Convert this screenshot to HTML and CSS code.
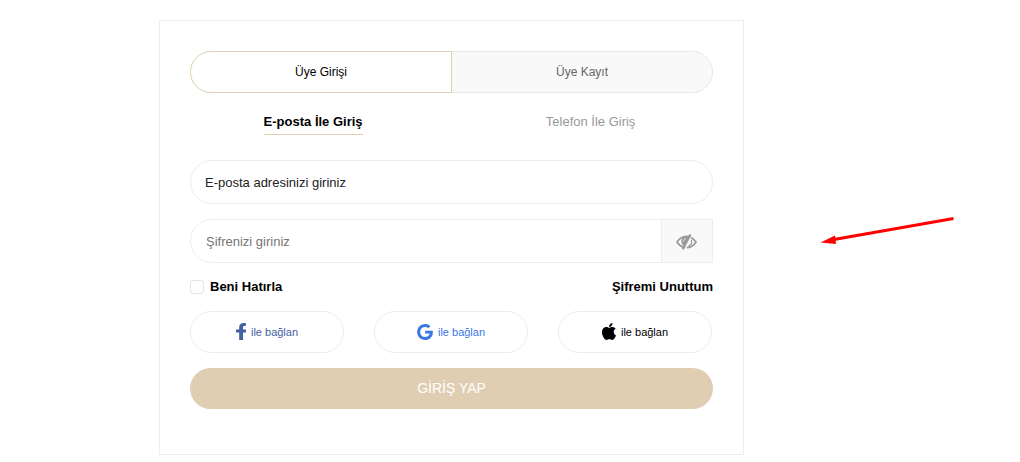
FILE: index.html
```html
<!DOCTYPE html>
<html lang="tr">
<head>
<meta charset="utf-8">
<title>Üye Girişi</title>
<link rel="stylesheet" href="styles.css">
</head>
<body>
<main class="card">
  <div class="tabs">
    <a class="tab tab-active">Üye Girişi</a>
    <a class="tab">Üye Kayıt</a>
  </div>
  <div class="methods">
    <a class="method method-active">E-posta İle Giriş</a>
    <a class="method">Telefon İle Giriş</a>
  </div>
  <div class="field"><span class="label">E-posta adresinizi giriniz</span></div>
  <div class="field password">
    <span class="label">Şifrenizi giriniz</span>
    <span class="toggle">
      <svg width="21" height="16" viewBox="0 0 21 16" fill="none" stroke="#999" stroke-width="1.7" stroke-linecap="round">
        <path d="M8.300 13.400C5 12.600 2.600 10.500 1 8C3.200 4.600 6.500 2.300 10.500 2.300C11.400 2.300 12.200 2.400 13 2.600"/>
        <path d="M15.400 3.700C17.300 4.700 18.800 6.200 20 8C17.900 11.300 14.900 13.400 11.400 13.700"/>
        <path d="M13.200 2.600C7.500 1.600 4.800 4.500 5.400 8.200C5.700 10 6.800 11.300 8.100 12Z" fill="#999" stroke="none"/>
        <path d="M7.500 7.200C7.600 6 8.400 5.200 9.500 5" stroke="#f9f9f9" stroke-width=".8"/>
        <path d="M14 1.200L7.200 14.600" stroke-width="2.200"/>
        <path d="M15.500 6.400C16 8.700 14.800 10.900 12.900 11.800" stroke-width="1.200"/>
      </svg>
    </span>
  </div>
  <div class="options">
    <label class="remember"><span class="box"></span>Beni Hatırla</label>
    <a>Şifremi Unuttum</a>
  </div>
  <div class="socials">
    <a class="social facebook">
      <svg width="10" height="17" viewBox="22 0 258 512" preserveAspectRatio="none" fill="currentColor"><path d="M279.140 288l14.220-92.660h-88.910v-60.130c0-25.350 12.420-50.060 52.240-50.060h40.420V6.260S260.430 0 225.360 0c-73.220 0-121.080 44.380-121.080 124.720v70.620H22.890V288h81.390v224h100.170V288z"/></svg>
      <span>ile bağlan</span>
    </a>
    <a class="social google">
      <svg width="16" height="16" viewBox="0 8 488 496" fill="currentColor"><path d="M488 261.800C488 403.300 391.100 504 248 504 110.800 504 0 393.200 0 256S110.800 8 248 8c66.800 0 123 24.500 166.300 64.900l-67.500 64.900C258.500 52.600 94.300 116.600 94.300 256c0 86.500 69.100 156.600 153.700 156.600 98.200 0 135-70.400 140.800-106.900H248v-85.300h236.100c2.300 12.700 3.900 24.900 3.900 41.400z"/></svg>
      <span>ile bağlan</span>
    </a>
    <a class="social apple">
      <svg width="14" height="17" viewBox="4 32 376 448" preserveAspectRatio="none" fill="currentColor"><path d="M318.700 268.700c-.2-36.700 16.400-64.400 50-84.800-18.800-26.900-47.200-41.700-84.700-44.600-35.500-2.800-74.300 20.700-88.500 20.700-15 0-49.400-19.700-76.400-19.700C63.300 141.200 4 184.800 4 273.500q0 39.300 14.400 81.200c12.800 36.700 59 126.700 107.200 125.200 25.200-.6 43-17.900 75.800-17.900 31.800 0 48.300 17.900 76.400 17.900 48.600-.7 90.400-82.500 102.600-119.300-65.200-30.700-61.700-90-61.700-91.900zm-56.600-164.200c27.300-32.400 24.800-61.900 24-72.500-24.100 1.400-52 16.400-67.900 34.900-17.500 19.800-27.800 44.300-25.600 71.900 26.100 2 49.900-11.400 69.500-34.300z"/></svg>
      <span>ile bağlan</span>
    </a>
  </div>
  <button class="submit">GİRİŞ YAP</button>
</main>
<svg class="arrow" width="136" height="30" viewBox="0 0 136 30" fill="#f00"><path d="M14 22.500L133.500 1.500" stroke="#f00" stroke-width="3"/><path d="M0.500 25.500L15 18.500L16 27Z"/></svg>
</body>
</html>
```

FILE: styles.css
```css
* { box-sizing: border-box; }
body {
  margin: 0;
  height: 462px;
  background: #fff;
  color: #000;
  font: 13px/16px "Liberation Sans", Arial, sans-serif;
  overflow: hidden;
}
.card {
  width: 585px;
  height: 435px;
  margin: 20px 0 0 159px;
  padding: 30px;
  border: 1px solid #ededed;
}
.tabs { display: flex; height: 42px; }
.tab {
  flex: 1;
  display: flex;
  align-items: center;
  justify-content: center;
  font-size: 12px;
  border: 1px solid #e8e8e8;
  border-left: 0;
  border-radius: 0 21px 21px 0;
  background: #f9f9f9;
  color: #666;
}
.tab-active {
  flex: none;
  width: 262px;
  border: 1px solid #dfceb1;
  border-radius: 21px 0 0 21px;
  background: #fff;
  color: #000;
}
.methods {
  display: flex;
  justify-content: space-around;
  margin: 0 -14px 0 -18px;
  padding-top: 20px;
}
.method { height: 22px; padding-top: 1px; color: #999; }
.method-active { color: #000; font-weight: bold; border-bottom: 1px solid #dfceb1; }
.field {
  display: flex;
  align-items: center;
  height: 44px;
  margin-top: 25px;
  padding-left: 14px;
  border: 1px solid #ededed;
  border-radius: 22px;
  color: #222;
}
.label { padding-top: 2px; }
.password {
  margin-top: 15px;
  padding-left: 15px;
  border-radius: 22px 0 0 22px;
  color: #757575;
  justify-content: space-between;
}
.toggle {
  width: 51px;
  height: 42px;
  display: flex;
  align-items: center;
  justify-content: center;
  padding: 1px 2px 0 0;
  border-left: 1px solid #ededed;
  background: #f9f9f9;
}
.options {
  display: flex;
  justify-content: space-between;
  height: 16px;
  margin-top: 16px;
  font-weight: bold;
}
.remember { display: flex; align-items: center; gap: 6px; }
.box { width: 14px; height: 14px; border: 1px solid #e5e5e5; border-radius: 3px; }
.socials { display: flex; gap: 30px; margin-top: 16px; }
.social {
  width: 154px;
  height: 42px;
  display: flex;
  align-items: center;
  justify-content: center;
  gap: 5px;
  border: 1px solid #ededed;
  border-radius: 21px;
  font-size: 11px;
}
.social svg { margin-bottom: 2px; }
.facebook { color: #4460a0; }
.google { color: #3b78e7; }
.social.google svg { margin-bottom: 1px; }
.submit {
  display: block;
  width: 100%;
  height: 41px;
  margin-top: 15px;
  padding: 0 0 2px;
  border: 0;
  border-radius: 21px;
  background: #dfceb1;
  color: #fff;
  font: 14px "Liberation Sans", Arial, sans-serif;
}
.arrow { position: absolute; left: 820px; top: 217px; }
```
